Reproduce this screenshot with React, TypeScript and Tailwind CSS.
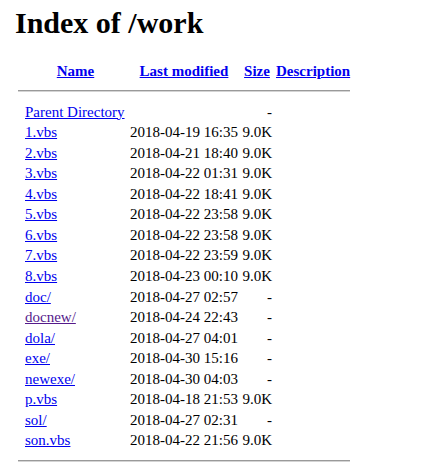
type Entry = {
  name: string
  modified: string
  size: string
  visited?: boolean
}

const entries: Entry[] = [
  { name: 'Parent Directory', modified: '', size: '-' },
  { name: '1.vbs', modified: '2018-04-19 16:35', size: '9.0K' },
  { name: '2.vbs', modified: '2018-04-21 18:40', size: '9.0K' },
  { name: '3.vbs', modified: '2018-04-22 01:31', size: '9.0K' },
  { name: '4.vbs', modified: '2018-04-22 18:41', size: '9.0K' },
  { name: '5.vbs', modified: '2018-04-22 23:58', size: '9.0K' },
  { name: '6.vbs', modified: '2018-04-22 23:58', size: '9.0K' },
  { name: '7.vbs', modified: '2018-04-22 23:59', size: '9.0K' },
  { name: '8.vbs', modified: '2018-04-23 00:10', size: '9.0K' },
  { name: 'doc/', modified: '2018-04-27 02:57', size: '-' },
  { name: 'docnew/', modified: '2018-04-24 22:43', size: '-', visited: true },
  { name: 'dola/', modified: '2018-04-27 04:01', size: '-' },
  { name: 'exe/', modified: '2018-04-30 15:16', size: '-' },
  { name: 'newexe/', modified: '2018-04-30 04:03', size: '-' },
  { name: 'p.vbs', modified: '2018-04-18 21:53', size: '9.0K' },
  { name: 'sol/', modified: '2018-04-27 02:31', size: '-' },
  { name: 'son.vbs', modified: '2018-04-22 21:56', size: '9.0K' },
]

// Apache-style directory index
export default function App() {
  return (
    <div className="min-h-[474px] bg-white pt-[8px] font-['Liberation_Serif','Times_New_Roman',serif] text-black">
      <h1 className="ml-[15px] text-[30px] font-bold leading-[30px]">Index of /work</h1>

      <div className="ml-[18px] mt-[22.5px] w-[332px] text-[15px] leading-[20.56px]">
        <div className="flex h-[20.56px] gap-x-[4px] pl-[7px] font-bold">
          <div className="w-[101px] text-center">
            <a href="#" className="text-[#0000ee] underline">Name</a>
          </div>
          <div className="w-[108px] text-center">
            <a href="#" className="text-[#0000ee] underline">Last modified</a>
          </div>
          <div className="w-[30px] text-center">
            <a href="#" className="text-[#0000ee] underline">Size</a>
          </div>
          <div className="w-[74px] text-center">
            <a href="#" className="text-[#0000ee] underline">Description</a>
          </div>
        </div>

        <Rule />

        {entries.map((e) => (
          <div key={e.name} className="flex h-[20.56px] gap-x-[4px] pl-[7px]">
            <div className="w-[101px] whitespace-nowrap">
              <a
                href="#"
                className={e.visited ? 'text-[#551a8b] underline' : 'text-[#0000ee] underline'}
              >
                {e.name}
              </a>
            </div>
            <div className="w-[108px] whitespace-nowrap text-right">{e.modified}</div>
            <div className="w-[30px] whitespace-nowrap text-right">{e.size}</div>
            <div className="w-[74px]" />
          </div>
        ))}

        <Rule />
      </div>
    </div>
  )
}

function Rule() {
  return (
    <div className="flex h-[20.56px] items-center">
      <div className="h-[2px] w-full border-t border-b border-t-[#9a9a9a] border-b-[#d4d4d4]" />
    </div>
  )
}
